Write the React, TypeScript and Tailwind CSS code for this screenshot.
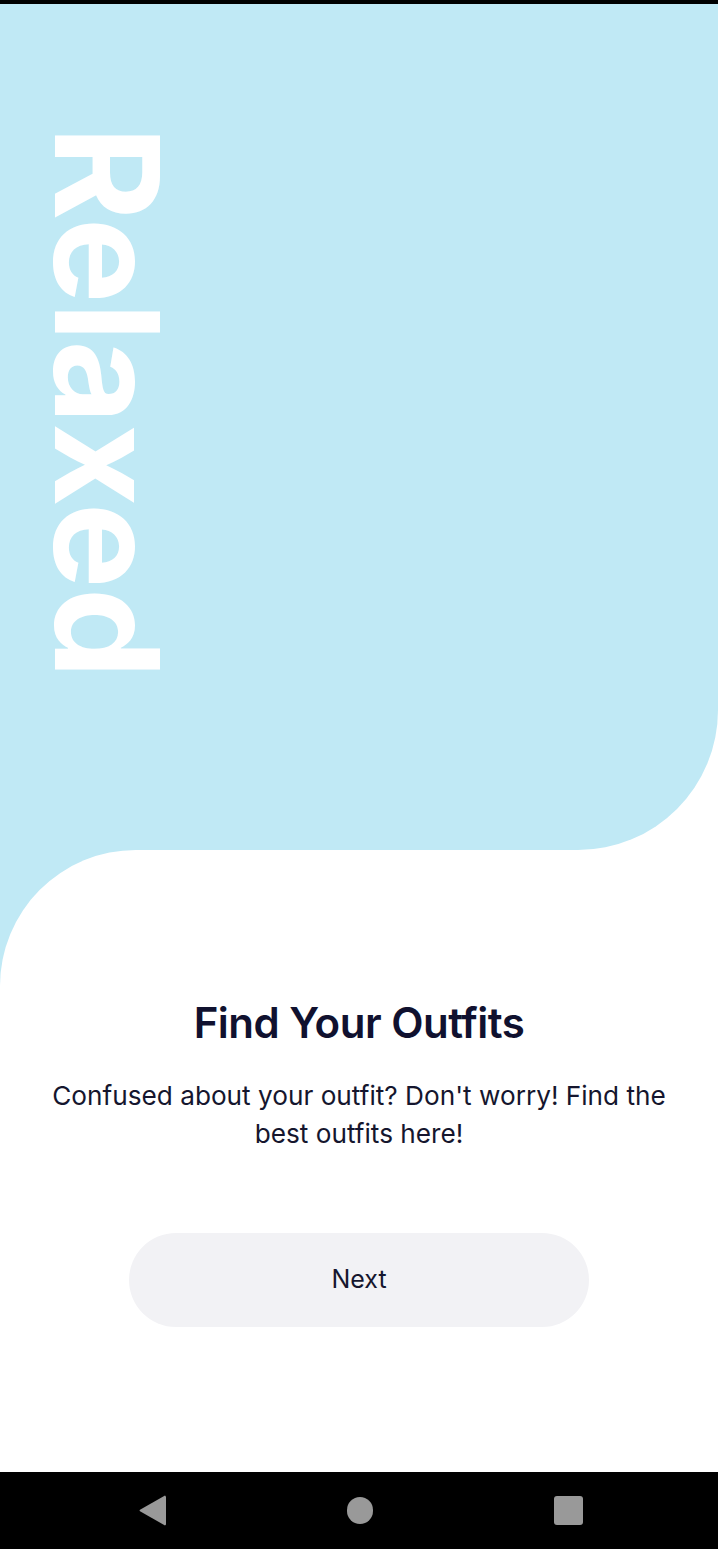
export default function App() {
  return (
    <div className="w-[718px] h-[1549px] flex flex-col bg-white font-['Inter',sans-serif] overflow-hidden">
      {/* status bar strip */}
      <div className="h-[4px] bg-black shrink-0" />

      {/* Hero */}
      <div className="h-[846px] shrink-0 bg-[#c0e9f5] rounded-br-[140px] pt-[122px] pl-[35px]">
        <p className="[writing-mode:vertical-rl] text-white font-bold text-[144px] leading-none tracking-[-1px]">
          Relaxed
        </p>
      </div>

      {/* Content */}
      <div className="flex-1 bg-[#c0e9f5]">
        <div className="h-full bg-white rounded-tl-[136px] flex flex-col items-center pt-[149px]">
          <h1 className="font-semibold text-[42px] leading-[48px] text-[#10112f] tracking-[-0.5px]">
            Find Your Outfits
          </h1>
          <p className="mt-[30px] px-[40px] text-center text-[26.2px] leading-[38px] text-[#15162e]">
            Confused about your outfit? Don't worry! Find the best outfits here!
          </p>
          <button className="mt-[80px] w-[460px] h-[94px] rounded-full bg-[#f2f2f5] text-[25px] text-[#15162e]">
            Next
          </button>
        </div>
      </div>

      {/* Nav bar */}
      <div className="h-[77px] shrink-0 bg-black flex items-center justify-center gap-[181px] pl-[3px]">
        <svg width="27" height="31" viewBox="0 0 27 31">
          <path d="M26 0.5 L27 1.5 L27 29.5 L26 30.5 L1 16.3 Q0 15.5 1 14.7 Z" fill="#999999" />
        </svg>
        <div className="w-[26px] h-[27px] rounded-full bg-[#999999]" />
        <div className="w-[29px] h-[29px] rounded-[3px] bg-[#999999]" />
      </div>
    </div>
  );
}
